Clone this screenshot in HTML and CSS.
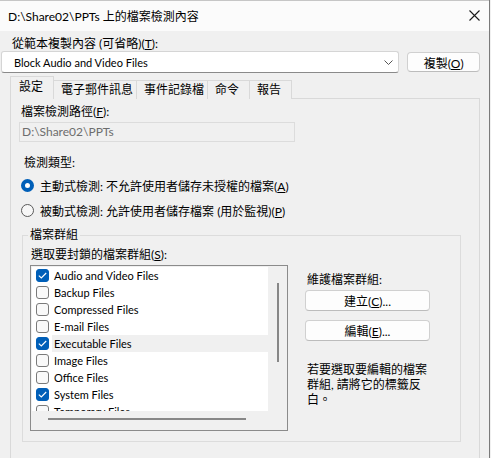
FILE: index.html
```html
<!DOCTYPE html>
<html lang="zh-Hant">
<head>
    <meta charset="UTF-8">
    <title>檔案檢測內容</title>
    <link rel="stylesheet" href="styles.css">
</head>
<body>
    <div class="window">
        <!-- Title bar -->
        <div class="titlebar">
            <span class="title">D:\Share02\PPTs 上的檔案檢測內容</span>
            <svg class="close" width="11" height="11" viewBox="0 0 11 11">
                <path d="M0.5 0.5 L10.5 10.5 M10.5 0.5 L0.5 10.5" stroke="#1a1a1a" stroke-width="1.1" fill="none"/>
            </svg>
        </div>

        <div class="dialog">
            <div class="top-label">從範本複製內容 (可省略)(<u>T</u>):</div>
            <div class="template-row">
                <div class="select">
                    <span class="latin">Block Audio and Video Files</span>
                    <svg width="9" height="5" viewBox="0 0 9 5">
                        <path d="M0.5 0.5 L4.5 4.5 L8.5 0.5" stroke="#555" stroke-width="1" fill="none"/>
                    </svg>
                </div>
                <button class="btn copy-btn">複製(<u>O</u>)</button>
            </div>

            <!-- Tabs -->
            <div class="tabs">
                <div class="tab active">設定</div>
                <div class="tab">電子郵件訊息</div>
                <div class="tab">事件記錄檔</div>
                <div class="tab">命令</div>
                <div class="tab">報告</div>
            </div>

            <div class="tab-panel">
                <div class="path-label">檔案檢測路徑(<u>F</u>):</div>
                <div class="path-input">D:\Share02\PPTs</div>

                <div class="type-label">檢測類型:</div>
                <div class="radio-row first">
                    <span class="radio checked"></span>
                    <span>主動式檢測: 不允許使用者儲存未授權的檔案(<u>A</u>)</span>
                </div>
                <div class="radio-row">
                    <span class="radio"></span>
                    <span>被動式檢測: 允許使用者儲存檔案 (用於監視)(<u>P</u>)</span>
                </div>

                <fieldset class="group">
                    <legend>檔案群組</legend>
                    <div class="group-body">
                        <div class="list-col">
                            <div class="list-label">選取要封鎖的檔案群組(<u>S</u>):</div>
                            <div class="listbox">
                                <div class="list-main">
                                    <div class="list-items" id="fileGroups"></div>
                                    <div class="vscroll"><div class="vthumb"></div></div>
                                </div>
                                <div class="hscroll"><div class="hthumb"></div></div>
                            </div>
                        </div>
                        <div class="side-col">
                            <div class="side-label">維護檔案群組:</div>
                            <button class="btn side-btn">建立(<u>C</u>)...</button>
                            <button class="btn side-btn">編輯(<u>E</u>)...</button>
                            <p class="hint">若要選取要編輯的檔案群組, 請將它的標籤反白。</p>
                        </div>
                    </div>
                </fieldset>
            </div>
        </div>
    </div>

    <script>
        // 檔案群組清單
        const groups = [
            { name: "Audio and Video Files", checked: true },
            { name: "Backup Files", checked: false },
            { name: "Compressed Files", checked: false },
            { name: "E-mail Files", checked: false },
            { name: "Executable Files", checked: true, selected: true },
            { name: "Image Files", checked: false },
            { name: "Office Files", checked: false },
            { name: "System Files", checked: true },
            { name: "Temporary Files", checked: false }
        ];

        const list = document.getElementById("fileGroups");
        groups.forEach(g => {
            let row = `<div class="item">
                <span class="check${g.checked ? " on" : ""}">${g.checked ? '<svg width="9" height="7" viewBox="0 0 9 7"><path d="M0.8 3.6 L3.3 6 L8.2 1" stroke="#fff" stroke-width="1.1" fill="none"/></svg>' : ""}</span>
                <span class="item-text latin${g.selected ? " selected" : ""}">${g.name}</span>
            </div>`;
            list.innerHTML += row;
        });
    </script>
</body>
</html>
```

FILE: styles.css
```css
/* General */
body {
    margin: 0;
    background-color: #f0f0f0;
    font-family: Lato, "Noto Sans CJK TC", sans-serif;
    font-size: 12px;
    color: #000;
    overflow: hidden;
}

u {
    text-decoration: underline;
    text-underline-offset: 1px;
}

.latin {
    font-size: 11px;
}

.window {
    width: 489px;
    height: 458px;
    border-right: 1px solid #7a7a7a;
}

/* Title bar */
.titlebar {
    height: 30px;
    background-color: #fbfbfb;
    border-top: 1px solid #c6c6c6;
    display: flex;
    align-items: center;
    justify-content: space-between;
    padding: 0 9px 0 8px;
}
.title {
    margin-top: -2px;
}
.close {
    margin-top: -1px;
}

/* Dialog */
.dialog {
    padding: 0 9px 0 1px;
}
.top-label {
    margin: 5px 0 0 11px;
    line-height: 15px;
}
.template-row {
    display: flex;
    gap: 8px;
}
.select {
    width: 381px;
    height: 20px;
    border: 1px solid #d5d5d5;
    border-bottom-color: #8a8a8a;
    border-radius: 3px;
    background-color: #fff;
    display: flex;
    align-items: center;
    justify-content: space-between;
    padding: 0 5px 0 12px;
}
.btn {
    font-family: Lato, "Noto Sans CJK TC", sans-serif;
    font-size: 12px;
    background-color: #fdfdfd;
    border: 1px solid #d0d0d0;
    border-bottom-color: #bcbcbc;
    border-radius: 4px;
    padding: 0;
    color: #000;
}
.copy-btn {
    width: 73px;
    height: 20px;
    margin-top: 1px;
}

/* Tabs */
.tabs {
    display: flex;
    align-items: flex-end;
    margin: 4px 0 -1px 9px;
    height: 22px;
    position: relative;
    z-index: 1;
}
.tab {
    height: 18px;
    line-height: 18px;
    padding: 0 3px 0 7px;
    min-width: 31px;
    border: 1px solid #d9d9d9;
    border-bottom: none;
    border-left: none;
    background-color: #f0f0f0;
}
.tab.active {
    height: 22px;
    line-height: 20px;
    min-width: 0;
    border-left: 1px solid #d9d9d9;
    padding: 0 10px 0 8px;
}
.tab-panel {
    margin-left: 9px;
    border: 1px solid #d9d9d9;
    height: 380px;
    padding: 5px 0 0 10px;
}

.path-label {
    line-height: 15px;
}
.path-input {
    margin: 3px 0 0 -2px;
    width: 272px;
    height: 18px;
    line-height: 18px;
    border: 1px solid #dcdcdc;
    padding-left: 2px;
    color: #6d6d6d;
}
.type-label {
    margin: 13px 0 0 3px;
    line-height: 15px;
}
.radio-row {
    display: flex;
    align-items: center;
    gap: 6px;
    height: 17px;
    margin-top: 8px;
}
.radio-row.first {
    margin-top: 7px;
}
.radio {
    width: 11px;
    height: 11px;
    border: 1px solid #5a5a5a;
    border-radius: 50%;
    background-color: #f7f7f7;
}
.radio.checked {
    width: 5px;
    height: 5px;
    border: 4px solid #005fb8;
    background-color: #fff;
}

/* Group box */
.group {
    margin: 9px 0 0 1px;
    width: 439px;
    height: 214px;
    box-sizing: border-box;
    border: 1px solid #dcdcdc;
    padding: 0 0 0 8px;
}
.group legend {
    padding: 0 2px;
    margin-left: -3px;
    line-height: 14px;
}
.group-body {
    display: flex;
    gap: 17px;
}
.list-label {
    line-height: 15px;
    margin-top: 5px;
}
.listbox {
    margin: 3px 0 0 -1px;
    width: 254px;
    height: 162px;
    border: 1px solid #8b8b8b;
    padding: 1px;
    background-color: #f0f0f0;
}
.list-main {
    display: flex;
    height: 144px;
}
.list-items {
    width: 236px;
    background-color: #fff;
    overflow: hidden;
}
.item {
    display: flex;
    align-items: center;
    height: 17px;
}
.check {
    width: 11px;
    height: 11px;
    margin-left: 4px;
    border: 1px solid #7a7a7a;
    border-radius: 3px;
    background-color: #f9f9f9;
    display: flex;
    align-items: center;
    justify-content: center;
}
.check.on {
    background-color: #005fb8;
    border-color: #005fb8;
}
.item-text {
    margin-left: 3px;
    padding-left: 2px;
    height: 17px;
    line-height: 17px;
    flex: 1;
}
.item-text.selected {
    background-color: #f0f0f0;
}
.vscroll {
    flex: 1;
    display: flex;
    justify-content: center;
    padding-top: 16px;
}
.vthumb {
    width: 2px;
    height: 79px;
    background-color: #878787;
    margin-left: 1px;
}
.hscroll {
    height: 16px;
    display: flex;
    align-items: center;
    padding-left: 16px;
}
.hthumb {
    width: 198px;
    height: 2px;
    background-color: #878787;
}

/* Right column */
.side-col {
    padding-top: 30px;
    width: 125px;
}
.side-label {
    line-height: 15px;
    margin-left: 2px;
}
.side-btn {
    display: block;
    width: 125px;
    height: 21px;
    margin-top: 3px;
}
.side-btn + .side-btn {
    margin-top: 9px;
}
.hint {
    margin: 21px 0 0 2px;
    line-height: 15px;
    width: 120px;
}
```
